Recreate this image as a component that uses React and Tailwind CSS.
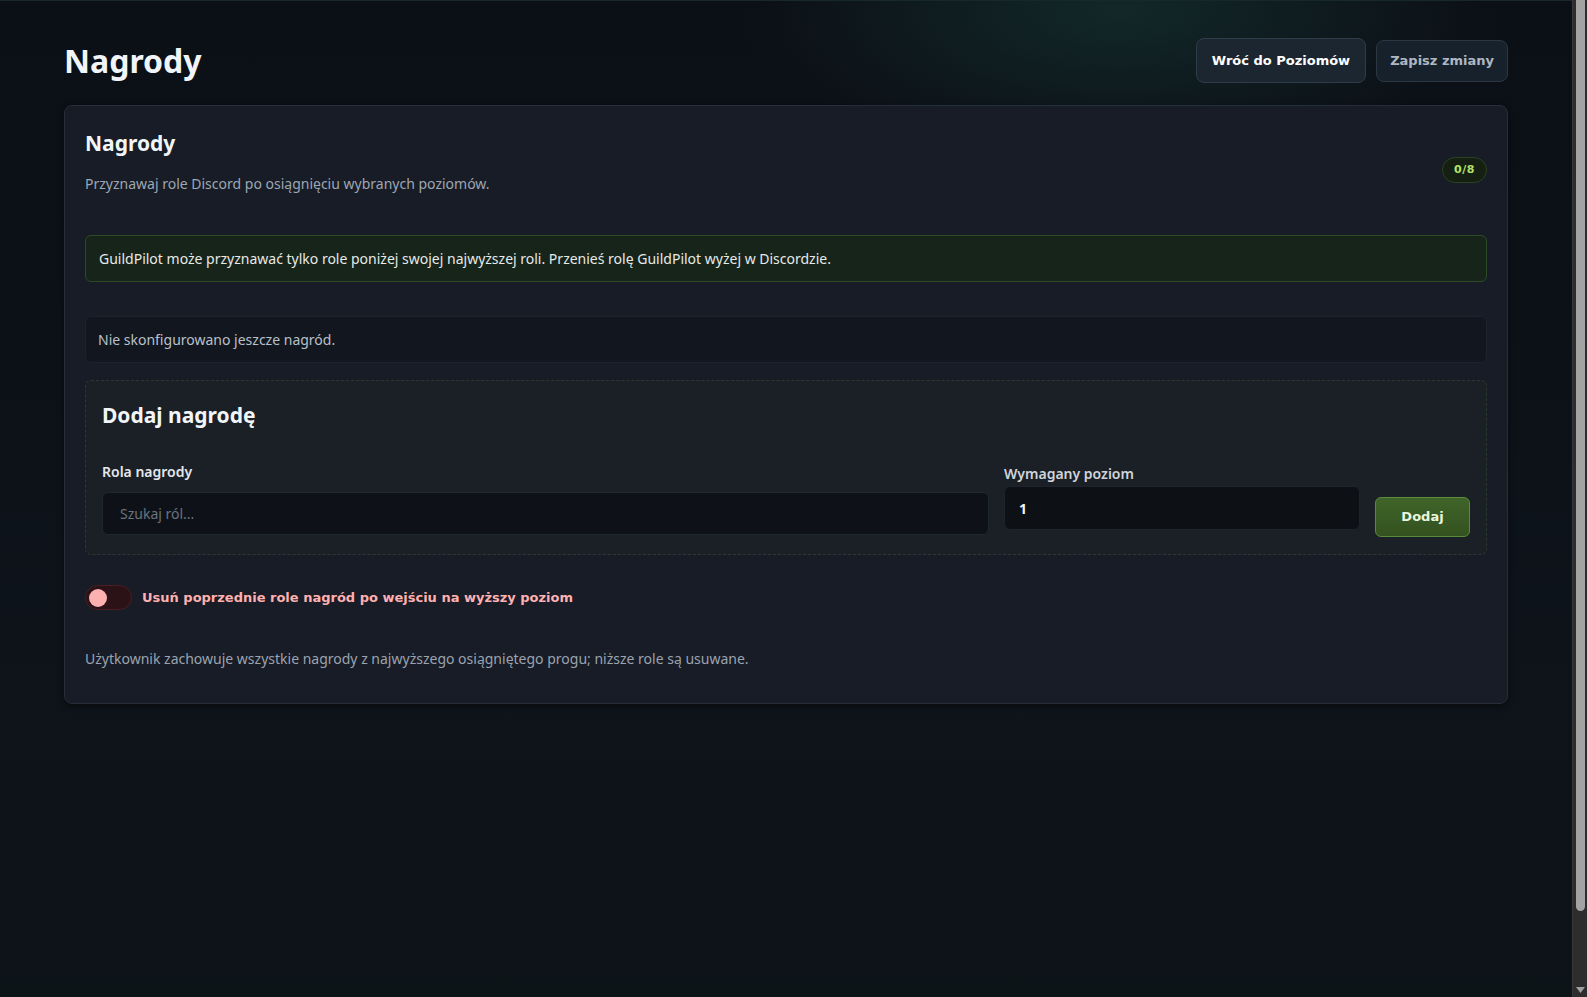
export default function App() {
  const body = { fontFamily: '"Noto Sans", "Open Sans", sans-serif' };
  const heavy = { fontFamily: '"DejaVu Sans", "Noto Sans", sans-serif' };

  return (
    <div className="flex h-[997px] w-full overflow-hidden bg-[#0b1016]" style={body}>
      {/* page */}
      <div className="relative min-w-0 flex-1 bg-[radial-gradient(ellipse_380px_150px_at_1120px_10px,rgba(30,80,70,0.38),transparent),linear-gradient(180deg,#0b0f16_0%,#0d131a_60%,#0d1418_100%)] text-white">
        <div className="h-px w-full bg-[#17282d]" />
        <div className="px-16 pt-[37px]">
          {/* page header */}
          <div className="flex items-center justify-between">
            <h1 className="text-[32px] font-bold leading-[40px] text-[#f1f5f9]">Nagrody</h1>
            <div className="flex items-center gap-[10px]">
              <button
                className="h-[45px] rounded-lg border border-[#2f3c49] bg-[#1b2631] px-[15px] text-[13px] font-bold text-white"
                style={heavy}
              >
                Wróć do Poziomów
              </button>
              <button
                className="h-[42px] rounded-lg border border-[#2b3743] bg-[#17212b] px-[13px] text-[13px] font-bold text-[#aeb7c2]"
                style={heavy}
              >
                Zapisz zmiany
              </button>
            </div>
          </div>

          {/* rewards card */}
          <div className="mt-[22px] rounded-lg border border-[#262e39] bg-[#171c26] px-5 pb-[34px] pt-[23px] shadow-[0_2px_6px_rgba(0,0,0,0.4)]">
            <div className="flex items-start justify-between">
              <div>
                <h2 className="text-[21px] font-bold leading-[28px] text-[#f1f5f9]">Nagrody</h2>
                <p className="mt-[17px] text-[14px] leading-[20px] text-[#9ea7b3]">
                  Przyznawaj role Discord po osiągnięciu wybranych poziomów.
                </p>
              </div>
              <span
                className="mt-[28px] flex h-[26px] w-[45px] items-center justify-center rounded-full border border-[#2a421f] bg-[#152013] text-[11px] font-bold tracking-[0.5px] text-[#b5e36a]"
                style={heavy}
              >
                0/8
              </span>
            </div>

            <div className="mt-[41px] flex h-[47px] items-center rounded-md border border-[#2c4a24] bg-[#17241a] px-[13px] text-[14px] leading-[20px] text-[#e6eae8]">
              GuildPilot może przyznawać tylko role poniżej swojej najwyższej roli. Przenieś rolę GuildPilot wyżej w Discordzie.
            </div>

            <div className="mt-[34px] flex h-[47px] items-center rounded-md border border-[#1d232c] bg-[#12161e] px-[12px] text-[14px] leading-[20px] text-[#b9c0c9]">
              Nie skonfigurowano jeszcze nagród.
            </div>

            {/* add reward form */}
            <div className="mt-[17px] rounded-md border border-dashed border-[#2b3a30] bg-[#1a2026] pb-[17px] pl-[16px] pr-[16px] pt-[20px]">
              <h3 className="text-[21px] font-bold leading-[28px] text-[#f1f5f9]">Dodaj nagrodę</h3>
              <div className="mt-[33px] flex items-start gap-[15px]">
                <div className="flex-1">
                  <label className="block text-[14px] font-semibold leading-[20px] text-[#e5e7eb]">Rola nagrody</label>
                  <div className="mt-[10px] flex h-[43px] items-center rounded-md border border-[#1f2731] bg-[#0e1218] px-[17px] text-[14px] text-[#6b737d]">
                    Szukaj ról...
                  </div>
                </div>
                <div className="mt-[2px] w-[356px]">
                  <label className="block text-[14px] font-semibold leading-[20px] text-[#d1d5db]">Wymagany poziom</label>
                  <div className="mt-[2px] flex h-[44px] items-center rounded-md border border-[#1c232c] bg-[#0d1116] px-[14px] text-[14px] font-bold text-[#f1f5f9]">
                    1
                  </div>
                </div>
                <button
                  className="mt-[35px] h-[40px] w-[95px] rounded-md border border-[#5a8a3c] bg-[linear-gradient(180deg,#3f6429,#33521f)] text-[13px] font-bold text-[#eaf5de]"
                  style={heavy}
                >
                  Dodaj
                </button>
              </div>
            </div>

            {/* toggle */}
            <div className="mt-[30px] flex items-center gap-[10px]">
              <div className="flex h-[25px] w-[47px] items-center rounded-full border border-[#4a1e23] bg-[#2a1216] pl-[3px]">
                <div className="h-[18px] w-[18px] rounded-full bg-[#fdb0b0]" />
              </div>
              <span className="text-[13px] font-bold text-[#ffb0b0]" style={heavy}>
                Usuń poprzednie role nagród po wejściu na wyższy poziom
              </span>
            </div>

            <p className="mt-[39px] text-[14px] leading-[20px] text-[#9ca3af]">
              Użytkownik zachowuje wszystkie nagrody z najwyższego osiągniętego progu; niższe role są usuwane.
            </p>
          </div>
        </div>
      </div>

      {/* window scrollbar */}
      <div className="flex w-[15px] shrink-0 flex-col border-l border-[#383838] bg-[#2d2d2d]">
        <div className="mx-auto h-[911px] w-[9px] rounded-b-full bg-[#a3a3a3]" />
        <div className="flex-1" />
        <svg className="mx-auto mb-[4px]" width="9" height="6" viewBox="0 0 9 6">
          <path d="M0 0 H9 L4.5 6 Z" fill="#a0a0a0" />
        </svg>
      </div>
    </div>
  );
}
